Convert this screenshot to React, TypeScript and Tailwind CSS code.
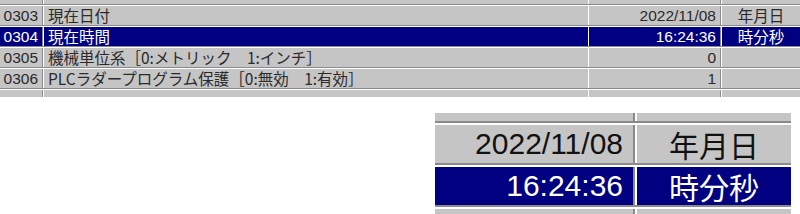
type Row = {
  no: string;
  name: string;
  value: string;
  unit: string;
  selected?: boolean;
};

const rows: Row[] = [
  { no: '0303', name: '現在日付', value: '2022/11/08', unit: '年月日' },
  { no: '0304', name: '現在時間', value: '16:24:36', unit: '時分秒', selected: true },
  { no: '0305', name: '機械単位系［0:メトリック　1:インチ］', value: '0', unit: '' },
  { no: '0306', name: 'PLCラダープログラム保護［0:無効　1:有効］', value: '1', unit: '' },
];

// digits in the original are wider than Noto CJK's
const numFont = "font-['Liberation_Sans','Noto_Sans_CJK_JP',sans-serif]";

function ParamRow({ row }: { row: Row }) {
  const cell = row.selected ? 'bg-[#000080] text-white' : 'text-[#2a2a2a]';
  return (
    <div className="flex h-[21px] border-y border-t-white border-b-[#8a8a8a]">
      <div className={`flex w-[43px] items-center justify-end pr-[4px] text-[15.5px] border-r border-r-[#8a8a8a] ${numFont} ${cell}`}>
        {row.no}
      </div>
      <div className={`flex flex-1 items-center pl-[4px] text-[15.5px] border-l border-l-white ${cell}`}>{row.name}</div>
      <div className={`flex w-[133px] items-center justify-end pr-[4px] text-[15.5px] border-x border-l-white border-r-[#8a8a8a] ${numFont} ${cell}`}>
        {row.value}
      </div>
      <div className={`flex w-[79px] items-center justify-center text-[15.5px] border-l border-l-white ${cell}`}>{row.unit}</div>
    </div>
  );
}

function PartialRow({ top }: { top?: boolean }) {
  return (
    <div className={`flex ${top ? 'h-[5px] border-b border-b-[#8a8a8a]' : 'h-[8px] border-t border-t-white'}`}>
      <div className="w-[43px] h-full border-r border-r-[#8a8a8a]" />
      <div className="flex-1 h-full border-l border-l-white" />
      <div className="w-[133px] h-full border-x border-l-white border-r-[#8a8a8a]" />
      <div className="w-[79px] h-full border-l border-l-white" />
    </div>
  );
}

function ZoomInset() {
  return (
    <div className="flex justify-end pr-[9px]">
      <div className="w-[356px] bg-[#c6c5c6] leading-none">
        <div className="flex h-[10px] border-b-2 border-b-[#8a8a8a]">
          <div className="w-[200px] border-r-2 border-r-[#8a8a8a]" />
          <div className="flex-1 border-l-2 border-l-white" />
        </div>
        <div className="flex h-[42px] border-t-2 border-t-white border-b-2 border-b-[#8a8a8a]">
          <div className={`flex w-[200px] items-center justify-end pr-[10px] text-[30px] text-[#111] border-r-2 border-r-[#8a8a8a] ${numFont}`}>
            2022/11/08
          </div>
          <div className="flex flex-1 items-center justify-center text-[30px] text-[#111] border-l-2 border-l-white">年月日</div>
        </div>
        <div className="flex h-[42px] border-t-2 border-t-white border-b-2 border-b-[#8a8a8a]">
          <div className={`flex w-[200px] items-center justify-end pr-[10px] text-[30px] bg-[#000080] text-white border-r-2 border-r-[#8a8a8a] ${numFont}`}>
            16:24:36
          </div>
          <div className="flex flex-1 items-center justify-center text-[30px] bg-[#000080] text-white border-l-2 border-l-white">
            時分秒
          </div>
        </div>
        <div className="flex h-[7px] border-t-2 border-t-white">
          <div className="w-[200px] border-r-2 border-r-[#8a8a8a]" />
          <div className="flex-1 border-l-2 border-l-white" />
        </div>
      </div>
    </div>
  );
}

export default function App() {
  return (
    <div className="w-[800px] h-[214px] overflow-hidden bg-white font-['Noto_Sans_CJK_JP',sans-serif]">
      <div className="bg-[#c6c5c6] leading-none">
        <PartialRow top />
        {rows.map((r) => (
          <ParamRow key={r.no} row={r} />
        ))}
        <PartialRow />
      </div>
      <div className="h-[16px]" />
      <ZoomInset />
    </div>
  );
}
